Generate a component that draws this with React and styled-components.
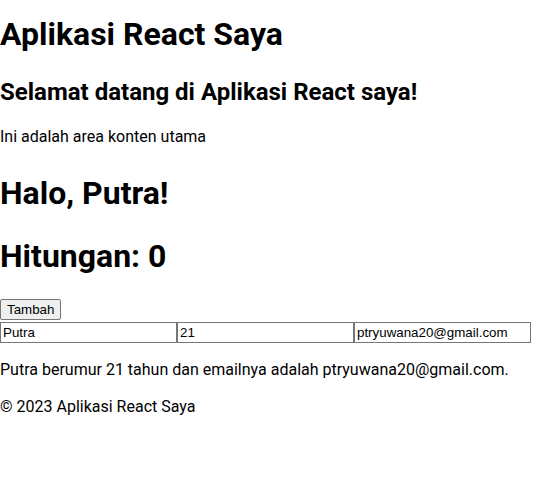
import React, { useState } from 'react'
import styled, { createGlobalStyle } from 'styled-components'

const Global = createGlobalStyle`
  body {
    margin: 0;
    font-family: Roboto, "Noto Sans", sans-serif;
    line-height: 1.33;
    color: #000;
    background: #fff;
  }
`

const Page = styled.div`
  padding-top: 13px;
`

const Title = styled.h1`
  font-size: 32px;
  font-weight: 700;
  margin: ${(p) => p.$gap || 0}px 0 0;
`

const Subtitle = styled.h2`
  font-size: 24px;
  font-weight: 700;
  margin: 21px 0 0;
`

const Text = styled.p`
  font-size: 16px;
  margin: ${(p) => p.$gap || 16}px 0 0;
`

const Counter = styled.div`
  margin-top: 21px;
`

const Button = styled.button`
  font-family: "Liberation Sans", Arial, sans-serif;
  font-size: 13.33px;
  height: 21px;
  padding: 0 6px;
  background: #efefef;
  border: 1px solid #767676;
  border-radius: 2px;
  color: #000;
  display: block;
`

const Form = styled.div`
  display: flex;
  margin-top: 2px;
`

const Field = styled.input`
  box-sizing: border-box;
  width: 177px;
  height: 21px;
  margin: 0;
  padding: 1px 2px;
  border: 1px solid #767676;
  font-family: "Liberation Sans", Arial, sans-serif;
  font-size: 13.33px;
  color: #000;
  background: #fff;
`

export default function App() {
  const [count, setCount] = useState(0)
  const [name, setName] = useState('Putra')
  const [age, setAge] = useState('21')
  const [email, setEmail] = useState('ptryuwana20@gmail.com')

  return (
    <>
      <Global />
      <Page>
        <header>
          <Title>Aplikasi React Saya</Title>
        </header>
        <main>
          <Subtitle>Selamat datang di Aplikasi React saya!</Subtitle>
          <Text $gap={18}>Ini adalah area konten utama</Text>
          <Title $gap={24}>Halo, {name}!</Title>
          <Title $gap={21}>Hitungan: {count}</Title>
          <Counter>
            <Button onClick={() => setCount(count + 1)}>Tambah</Button>
          </Counter>
          <Form>
            <Field value={name} onChange={(e) => setName(e.target.value)} />
            <Field value={age} onChange={(e) => setAge(e.target.value)} />
            <Field value={email} onChange={(e) => setEmail(e.target.value)} />
          </Form>
          <Text $gap={16}>
            {name} berumur {age} tahun dan emailnya adalah {email}.
          </Text>
        </main>
        <footer>
          <Text>© 2023 Aplikasi React Saya</Text>
        </footer>
      </Page>
    </>
  )
}
